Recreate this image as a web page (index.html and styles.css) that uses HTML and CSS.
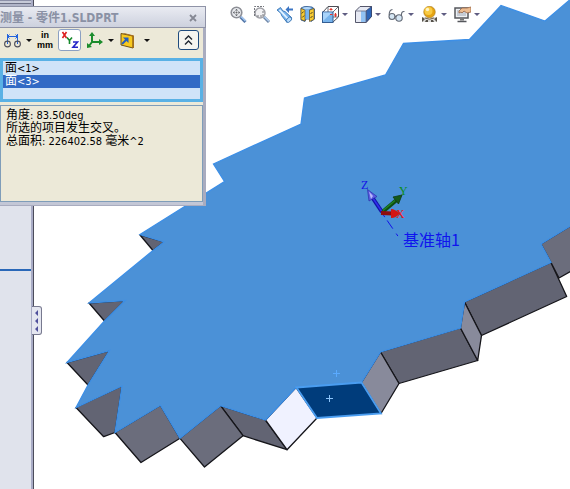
FILE: index.html
```html
<!DOCTYPE html>
<html lang="zh-CN">
<head>
<meta charset="utf-8">
<title>测量 - 零件1.SLDPRT</title>
<link rel="stylesheet" href="styles.css">
</head>
<body>
<div class="app">
  <aside class="side">
    <div class="side-top"></div>
    <div class="side-bottom"></div>
    <button class="handle" aria-label="折叠面板">
      <svg viewBox="0 0 9 28" width="9" height="28"><path fill="#4f4f9c" d="M6 3v6L3 6zM6 11v6l-3-3zM6 19v6l-3-3z"/></svg>
    </button>
  </aside>

  <main class="viewport">
    <svg class="model" viewBox="34 0 536 489" preserveAspectRatio="xMinYMin meet">
      <g stroke="#15151a" stroke-width="1.300" stroke-linejoin="round">
        <g fill="#626473">
          <path d="M140 235L164 242L153 250.500Z"/>
          <path d="M89 303L125 300.500L104.500 321Z"/>
          <path d="M67 362.500L109.500 350.500L88 385Z"/>
          <path d="M76 407.500L122 386L115 432.500L103.700 436.700Z"/>
          <path d="M220.500 405.700L265.500 420L287 449.700L243 435.700Z"/>
          <path d="M380.500 352L460.500 328L477.700 360.500L399 383.500Z"/>
          <path d="M464.500 302L551 262.500L566.700 296.500L481.500 335.500Z"/>
        </g>
        <g fill="#6b6d7c">
          <path d="M115 432.500L160.500 405.300L180 438.300L141 462.500Z"/>
          <path d="M180 438.300L220.500 405.700L243 435.700L204.500 467Z"/>
          <path d="M541 244L572 225L572 270.500L559 278L551 262.500Z"/>
        </g>
        <path fill="#f0f2ff" d="M265.500 420L296 387.500L317 418L287 449.700Z"/>
        <g fill="#888a9b">
          <path d="M361.500 382.500L380.500 352L399 383.500L381 413.500Z"/>
          <path d="M460.500 328L464.500 302L481.500 335.500L477.700 360.500Z"/>
        </g>
      </g>
      <path fill="#4b91d7" stroke="#3d8fe6" stroke-width="1.300" d="M572-2L545 21L501 5.500L469.500 39.500L403.500 43.500L385.500 75L304.500 98L301 124L213.500 164L224.500 181.500L140 234.500L164 242L153 250.500L89 303L125 300.500L104.500 321L67 362.500L109.500 350.500L88 385L76 407.500L122 386L115 432.500L160.500 405.300L180 438.300L220.500 405.700L265.500 420L296 387.500L361.500 382.500L380.500 352L460.500 328L464.500 302L551 262.500L541 244L572 225Z"/>
      <path fill="#003c7b" stroke="#4a9df0" stroke-width="1.800" d="M296.500 387.500L361.500 382.500L381 413.500L317 418Z"/>
      <path stroke="#5aaaff" fill="none" d="M333 373.500h7M336.500 370v7"/>
      <path stroke="#8cc4fa" fill="none" d="M326 398.500h7M329.500 395v7"/>

      <path d="M382 213L402 242" stroke="#1212e8" stroke-dasharray="5 4 10 6 3 9" fill="none"/>
      <path d="M382 212L372 197" stroke="#1414a8" stroke-width="4"/>
      <path d="M381.500 211L371.500 196" stroke="#3030ee" stroke-width="1.500"/>
      <path d="M367.500 189.500L377 196.500L369 201Z" fill="#5b5be0" stroke="#2323a0" stroke-width=".6"/>
      <path d="M369 191.500L373 196L371 199Z" fill="#b8b8fa"/>
      <path d="M383 211.500L396 200.500" stroke="#0e4c12" stroke-width="4"/>
      <path d="M383 210.500L395 200.500" stroke="#1f8426" stroke-width="1.500"/>
      <path d="M402 195L393 197L398.500 204Z" fill="#14591a" stroke="#0b3c10" stroke-width=".8"/>
      <path d="M381 213L393 213.500" stroke="#8e0e0e" stroke-width="4"/>
      <path d="M391 209Q395 209 400 213.500Q395 218.500 391 218Z" fill="#d41515"/>
      <text class="axis axis-z" x="361" y="189">Z</text>
      <text class="axis axis-y" x="399" y="195">Y</text>
      <text class="axis axis-x" x="396" y="218">X</text>
      <text class="datum" x="403" y="246">基准轴1</text>
    </svg>
  </main>

  <nav class="view-bar" aria-label="视图">
    <div class="view-group">
      <button aria-label="整屏显示"><svg viewBox="0 0 17 17" width="17" height="17"><circle cx="6.500" cy="6.500" r="5.300" fill="#e8eaee" stroke="#8d8f96" stroke-width="1.600"/><path d="M6.500 3l1.500 1.500h-3zM6.500 10l1.500-1.500h-3zM3 6.500l1.500-1.500v3zM10 6.500l-1.500-1.500v3z" fill="#44464c"/><circle cx="6.500" cy="6.500" r="1" fill="#666"/><path d="M10.500 11l5 5" stroke="#5477a8" stroke-width="3"/><path d="M11 10.500l4.500 4.500" stroke="#a9ccf4" stroke-width="1.300"/></svg></button>
      <button aria-label="局部放大"><svg viewBox="0 0 17 17" width="17" height="17"><circle cx="7" cy="7" r="5" fill="#f2f2f4" stroke="#a0a1a7" stroke-width="1.500"/><path d="M1.500 10V.500H11" fill="none" stroke="#77797f" stroke-dasharray="2 1"/><path d="M4 10h6V4" fill="none" stroke="#77797f" stroke-dasharray="2 1"/><path d="M11 11l5 5" stroke="#7088a8" stroke-width="3"/><path d="M11.500 10.700l4.500 4.500" stroke="#b7d3f4" stroke-width="1.300"/></svg></button>
      <button aria-label="上一视图"><svg viewBox="0 0 17 17" width="17" height="17"><path d="M1 4l3.500-2.500 2.500 3.500 2 .5 6.500 6-4.500 5-5.500-7-.5-2z" fill="#78b4ee" stroke="#2b69ac" stroke-width=".8"/><path d="M3.500 3.800l8.500 9" stroke="#e4f2ff" stroke-width="1.800"/><ellipse cx="13" cy="13.700" rx="3.200" ry="2" fill="#b9dcfc" stroke="#2b69ac" stroke-width=".8" transform="rotate(-45 13 13.700)"/><path d="M9.500 3.500l3.500-3.500v2.500h4v2h-4V7z" fill="#3b75c4"/></svg></button>
      <button aria-label="剖面视图"><svg viewBox="0 0 17 17" width="17" height="17"><path d="M2 2q3-2 6-1.500L13 1l2.500 2v10L12 15.500 10 13H7L6 15.500 2 14z" fill="#4d86c9" stroke="#30598e" stroke-width=".8"/><path d="M2 2.500l4 1.500v11L2 13.500zM10.500 4L15 2.500v11L10.500 15.500z" fill="#f7cb32" stroke="#645229" stroke-width=".7"/><path d="M2.700 7.500l2-2M3.200 11.500l2-2M11.500 8l2-2M11.500 12l2-2" stroke="#4e4223"/><path d="M6.500 4h3.500v9H6.500z" fill="#78b4ee"/><path d="M3 2q5-2 10 0L10 3.500H6z" fill="#b4d9fa"/></svg></button>
    </div>
    <div class="view-group wide">
      <button aria-label="视图定向"><svg viewBox="0 0 17 17" width="17" height="17"><path d="M1 6L6 .500h10.500v10.500l-5.500 5" fill="#fff" stroke="#4d4d55"/><path d="M6 1v5M11 11h5M11 6l5-5" stroke="#4d4d55" fill="none" stroke-width=".8"/><rect x=".5" y="6" width="10.500" height="10.500" fill="#78b4ec" stroke="#345e93"/><path d="M1 6.500h9L1 15z" fill="#a9d4fa"/><path d="M9 2v2.500M7.500 3.500h3M13.500 7v4M12 9h3M8 8.500h2.500" stroke="#e2362d" stroke-width="1.200"/></svg><i class="caret"></i></button>
      <button aria-label="显示样式"><svg viewBox="0 0 17 17" width="17" height="17"><path d="M.500 5L5 .500h11.500v10L11 16.500H.500z" fill="#e6e9f3" stroke="#55576b"/><path d="M11 5L16.500.500v10L11 16.500z" fill="#2e66b8" stroke="#37456c" stroke-width=".8"/><path d="M6 5h5v11H6z" fill="#91c2f4"/><path d="M.500 5H11v11.500" fill="none" stroke="#686b80" stroke-width=".8"/></svg><i class="caret"></i></button>
      <button aria-label="隐藏项目"><svg viewBox="0 0 17 17" width="17" height="17"><g fill="#d5e6f4" stroke="#626975" stroke-width="1.100"><circle cx="4" cy="10.500" r="3"/><circle cx="11" cy="12" r="3.200"/><path fill="none" d="M7 11q1-1.500 1 0M1.200 9Q1 4 4.500 3.500M13.500 10Q13 5 16.500 5.500"/></g></svg><i class="caret"></i></button>
      <button aria-label="应用布景"><svg viewBox="0 0 17 17" width="17" height="17"><path d="M1 11h15v5H1z" fill="#dcdcda"/><path d="M1 11l3 2-3 3zM16 11l-3 2 3 3zM5 14h2v2H4zM10 14h2l1 2h-3z" fill="#55514a"/><circle cx="8.500" cy="6" r="5.800" fill="#e4a313" stroke="#9b6d11" stroke-width=".5"/><circle cx="7.500" cy="5" r="4" fill="#f9cb43"/><circle cx="6.500" cy="3.500" r="1.700" fill="#fff4c4"/><path d="M4 12q4.500 2.500 9 0" stroke="#76654b" fill="none"/></svg><i class="caret"></i></button>
      <button aria-label="视图设定"><svg viewBox="0 0 17 17" width="17" height="17"><rect x="1" y="2" width="13" height="10" fill="#eef0f3" stroke="#55575c" stroke-width="1.500"/><rect x="3" y="4" width="9" height="6" fill="#c5cbd4"/><path d="M6 12.500h4v2H6z" fill="#777"/><path d="M3.500 15.500h9" stroke="#55575c" stroke-width="1.500"/><path d="M5 5l3-3h5l4-1v5l-4 1-3-2-2 2-1-1-2 1z" fill="#edbd91" stroke="#9b6644" stroke-width=".8"/></svg><i class="caret"></i></button>
    </div>
  </nav>

  <section class="dialog" aria-label="测量">
    <header class="title">
      <h1><span class="zh">测量</span> - <span class="zh">零件</span>1.SLDPRT</h1>
      <button class="close" aria-label="关闭"><svg viewBox="0 0 8 8" width="8" height="8"><path d="M1 1l6 6M7 1L1 7" stroke="#858894" stroke-width="1.800"/></svg></button>
    </header>
    <div class="tools">
      <button aria-label="圆弧/圆测量"><svg viewBox="0 0 17 17" width="17" height="17"><path d="M3.500 2v10M13.500 2v10M3.500 4.500h10M5.500 2.500l-2 2 2 2M11.500 2.500l2 2-2 2" fill="none" stroke="#2263dd"/><circle cx="3.500" cy="12" r="2.900" fill="none" stroke="#50505a" stroke-width="1.100"/><circle cx="13.500" cy="12" r="2.900" fill="none" stroke="#50505a" stroke-width="1.100"/></svg><i class="caret"></i></button>
      <button class="units"><span>in</span><span>mm</span></button>
      <button class="xyz" aria-label="显示 XYZ 测量" aria-pressed="true"><svg viewBox="0 0 21 20" width="21" height="20"><g fill="none" stroke-width="1.600"><path stroke="#dd1e1e" d="M3.500 2l4 6M7.500 2l-4 6"/><path stroke="#16892b" d="M8 7.500l2.500 3 2.500-3M10.500 10.500V14"/><path stroke="#2525c8" d="M14 12h4.500L14 17.300h5"/></g></svg></button>
      <button aria-label="点到点"><svg viewBox="0 0 17 17" width="17" height="17"><g fill="none" stroke="#1b8c2c" stroke-width="2"><path d="M6 3v7h8M6 10l-3 4"/></g><path d="M6 0l3 4H3zM17 10l-4 3V7zM1 16v-5l5 4z" fill="#1b8c2c"/></svg><i class="caret"></i></button>
      <button class="project" aria-label="投影于"><svg viewBox="0 0 17 17" width="17" height="17"><path d="M2 1.500l12 2.500v12L2 13z" fill="#f8c91e" stroke="#705318"/><path d="M3 1h2l10 2.500V16h-1.500V4.500z" fill="#a5701b"/><path d="M3 12l5-5" stroke="#235fc0" stroke-width="2"/><path d="M4 5.500h5.500V11z" fill="#235fc0"/></svg><i class="caret"></i></button>
      <button class="collapse" aria-label="收起"><svg viewBox="0 0 11 12" width="11" height="12"><path d="M2 5.500L5.500 2 9 5.500M2 10.500L5.500 7 9 10.500" fill="none" stroke="#1d2530" stroke-width="1.400"/></svg></button>
    </div>
    <ul class="picks" role="listbox" aria-label="所选项目">
      <li role="option" aria-selected="false"><span class="zh">面</span>&lt;1&gt;</li>
      <li role="option" aria-selected="true" class="active"><span class="zh">面</span>&lt;3&gt;</li>
    </ul>
    <div class="result">
      <p><span class="zh">角度</span>: 83.50deg</p>
      <p><span class="zh">所选的项目发生交叉。</span></p>
      <p><span class="zh">总面积</span>: 226402.58 <span class="zh">毫米</span>^2</p>
    </div>
  </section>
</div>
</body>
</html>
```
FILE: styles.css
```css
* { box-sizing: border-box; }

body {
  margin: 0;
  background: #fff;
  color: #000;
  font: 11px/13px "DejaVu Sans Condensed", "Noto Sans CJK SC", sans-serif;
}

button {
  display: flex;
  align-items: center;
  padding: 0;
  border: 0;
  background: none;
  color: inherit;
  font: inherit;
}

svg { display: block; }

.zh {
  font-family: "Noto Sans CJK SC", sans-serif;
  font-size: 12px;
  line-height: 8px;
}

.app {
  position: relative;
  display: grid;
  grid-template-columns: 34px 1fr;
  min-height: 100vh;
  overflow: hidden;
}

/* Manager pane on the left edge */
.side {
  position: relative;
  display: grid;
  grid-template-rows: 271fr 218fr;
  border-right: 1px solid #4c4d5c;
  background: #e0e3ec;
  box-shadow: inset -2px 0 #a9acc6;
}

.side-top {
  margin-right: 2px;
  border-top: 1px solid #8c90a8;
  border-bottom: 2px solid #2a68b8;
  box-shadow: inset 0 2px #c6cad8, inset 0 3px #6c7086, inset 0 5px #b0b4c8;
}

.handle {
  position: absolute;
  top: 306px;
  left: 32px;
  width: 10px;
  height: 29px;
  border: 1px solid #77798f;
  border-left: 0;
  border-radius: 0 3px 3px 0;
  background: #e4e6f0;
}

.viewport { min-width: 0; }

.model {
  width: 100%;
  height: auto;
}

.axis {
  font-family: "Liberation Serif", serif;
  font-size: 12px;
}

.axis-x { fill: #f01414; }
.axis-y { fill: #0a8c1a; }
.axis-z { fill: #1414e6; }

.datum {
  fill: #0f14ee;
  font-family: "Noto Sans CJK SC", sans-serif;
  font-size: 16px;
}

/* Heads-up view toolbar floating over the model */
.view-bar {
  position: absolute;
  top: 6px;
  left: 230px;
  display: flex;
  gap: 6px;
}

.view-group {
  display: flex;
  gap: 6px;
}

.view-group.wide { gap: 8px; }
.view-group button { gap: 3px; }

.caret {
  border: 3px solid transparent;
  border-top-color: #5f5d82;
  border-bottom: 0;
}

.view-group .caret { margin-right: -1px; }

/* Floating measure dialog */
.dialog {
  position: absolute;
  top: 6px;
  left: 0;
  width: 206px;
  padding-bottom: 3px;
  border: solid #a9acbf;
  border-width: 0 3px 1px 0;
  background: #ece9d8;
  box-shadow: inset 0 -3px #c3c7d6;
}

.title {
  display: flex;
  align-items: center;
  justify-content: space-between;
  height: 22px;
  margin-right: -3px;
  padding: 2px 8px 0 0;
  border: 1px solid #8f93a7;
  border-left: 0;
  background: linear-gradient(#e9ebf2, #cdd1de);
  color: #8a91a5;
}

.title h1 {
  margin: 0;
  font-size: 12px;
  font-weight: bold;
}

.tools {
  display: flex;
  align-items: center;
  gap: 5px;
  height: 30px;
  padding: 0 4px 6px;
}

.tools button { gap: 5px; }
.tools .caret { border-top-color: #111; }

.tools .units {
  flex-direction: column;
  gap: 0;
  width: 16px;
  font: bold 9px/10px "Liberation Sans", sans-serif;
}

.tools .xyz {
  width: 23px;
  height: 22px;
  border: 1px solid #8ba0c2;
  border-radius: 3px;
  background: #fff;
}

.tools .project { gap: 8px; }

.tools .collapse {
  justify-content: center;
  width: 21px;
  height: 20px;
  margin-left: auto;
  border: 1px solid #1e4b7e;
  border-radius: 3px;
  background: #f5f5f0;
}

.picks {
  height: 44px;
  margin: 0 0 3px;
  padding: 1px 0;
  border: 3px solid #59b1e5;
  background: #cfe3f8;
  list-style: none;
}

.picks li { padding-left: 2px; }

.picks .active {
  background: #316ac5;
  color: #fff;
}

.result {
  height: 97px;
  padding: 3px 5px;
  border: 1px solid #7f9db9;
}

.result p { margin: 0; }
```
